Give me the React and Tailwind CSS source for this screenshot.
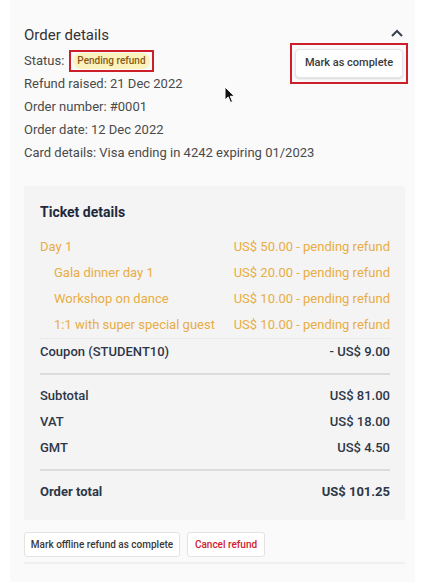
import React from "react";

const font = { fontFamily: "Roboto, 'Liberation Sans', sans-serif" };

function Row({ label, value, indent, className = "" }) {
  return (
    <div className={`flex h-[26px] items-center justify-between ${className}`}>
      <span className={indent ? "pl-[14px]" : ""}>{label}</span>
      <span>{value}</span>
    </div>
  );
}

export default function App() {
  return (
    <div className="min-h-[583px] w-[439px] bg-white" style={font}>
      <div className="relative ml-[10px] w-[405px] bg-[#fafafa] pl-[14px] pr-[10px] pt-[25px] pb-[18px]">
        <div className="flex justify-between">
          <div className="flex min-w-0 flex-1 flex-col whitespace-nowrap text-[13px] text-[#4a4a4a]">
            <div className="flex h-5 items-center text-[15px] text-[#333]">Order details</div>
            <div className="mt-1 flex h-[23px] items-center">
              <span>Status:</span>
              <span className="ml-[5px] border-2 border-[#cc1f2a] px-[2px] py-[1px]">
                <span className="flex h-[16px] items-center rounded-full bg-[#fbf2be] px-[4px] text-[10px] font-medium text-[#8a5a12]">
                  Pending refund
                </span>
              </span>
            </div>
            <div className="flex h-[23px] items-center">Refund raised: 21 Dec 2022</div>
            <div className="flex h-[23px] items-center">Order number: #0001</div>
            <div className="flex h-[23px] items-center">Order date: 12 Dec 2022</div>
            <div className="flex h-[23px] items-center">Card details: Visa ending in 4242 expiring 01/2023</div>
          </div>
          <div className="flex shrink-0 flex-col items-end">
            <svg width="14" height="9" viewBox="0 0 14 9" className="mt-[4px] mr-[1px]">
              <path d="M2 7 L7 2 L12 7" fill="none" stroke="#374151" strokeWidth="2" />
            </svg>
            <div className="-mr-[3px] mt-[5px] border-2 border-[#cc1f2a] px-[3px] py-[4px]">
              <div className="flex h-[29px] w-[108px] items-center justify-center rounded-[4px] border border-[#e5e5e5] bg-white text-[11px] font-medium text-[#3a3a3a] shadow-sm">
                Mark as complete
              </div>
            </div>
          </div>
        </div>

        <svg width="12" height="18" viewBox="0 0 12 18" className="absolute left-[214px] top-[86px]">
          <path d="M1 1 L1 14 L4.2 11 L6.5 16.5 L8.5 15.6 L6.3 10.3 L10.5 10.3 Z" fill="#111" stroke="#fff" strokeWidth="1" />
        </svg>

        <div className="mt-[22px] rounded-[3px] bg-[#f4f4f4] pl-4 pr-[15px] pt-4 pb-[15px] text-[13px] text-[#2d3748]">
          <div className="flex h-5 items-center text-[14px] font-bold text-[#1e293b]">Ticket details</div>
          <div className="mt-3 text-[#e8ad45]">
            <Row label="Day 1" value="US$ 50.00 - pending refund" />
            <Row label="Gala dinner day 1" value="US$ 20.00 - pending refund" indent />
            <Row label="Workshop on dance" value="US$ 10.00 - pending refund" indent />
            <Row label="1:1 with super special guest" value="US$ 10.00 - pending refund" indent />
          </div>
          <div className="border-t border-dotted border-[#e2e2e2]">
            <Row label="Coupon (STUDENT10)" value="- US$ 9.00" className="font-medium" />
          </div>
          <div className="mt-2 h-[2px] bg-[#dcdcdc]" />
          <div className="mt-2 font-medium">
            <Row label="Subtotal" value="US$ 81.00" />
            <Row label="VAT" value="US$ 18.00" />
            <Row label="GMT" value="US$ 4.50" />
          </div>
          <div className="mt-2 h-[2px] bg-[#dcdcdc]" />
          <div className="mt-2 font-bold">
            <Row label="Order total" value="US$ 101.25" />
          </div>
        </div>

        <div className="mt-3 flex gap-[7px] text-[10px] font-medium">
          <div className="flex h-[25px] w-[156px] items-center justify-center rounded-[3px] border border-[#e3e3e3] bg-white text-[#3a3a3a]">
            Mark offline refund as complete
          </div>
          <div className="flex h-[25px] w-[78px] items-center justify-center rounded-[3px] border border-[#e3e3e3] bg-white text-[#d0202e]">
            Cancel refund
          </div>
        </div>
        <div className="mt-[5px] h-[2px] bg-[#efefef]" />
      </div>
    </div>
  );
}
